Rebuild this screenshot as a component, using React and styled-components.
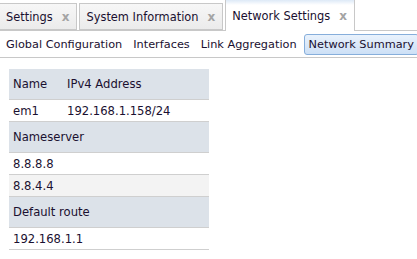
import React from "react";
import styled, { createGlobalStyle } from "styled-components";

const GlobalStyle = createGlobalStyle`
  * {
    margin: 0;
    padding: 0;
    box-sizing: border-box;
  }

  body {
    font-family: "DejaVu Sans", Verdana, sans-serif;
    font-size: 11px;
    background: #ffffff;
    color: #1a1030;
    width: 417px;
    height: 259px;
    overflow: hidden;
  }
`;

const Page = styled.div`
  display: flex;
  flex-direction: column;
`;

const TabBar = styled.div`
  display: flex;
  align-items: flex-end;
  height: 31px;
  border-bottom: 1px solid #c8c8c8;
  margin-left: -2px;
`;

const Tab = styled.div`
  display: flex;
  align-items: center;
  gap: 9px;
  height: ${(p) => (p.active ? "32px" : "27px")};
  margin-bottom: ${(p) => (p.active ? "-1px" : "0")};
  margin-right: 2px;
  padding: 0 7px 0 6px;
  border: 1px solid #c8c8c8;
  border-bottom: ${(p) => (p.active ? "none" : "1px solid #c8c8c8")};
  background: ${(p) =>
    p.active
      ? "linear-gradient(#dde9f7 0px, #ffffff 5px, #ffffff 100%)"
      : "linear-gradient(#f7f7f7, #ebebeb)"};
  font-size: 11.4px;
  color: #1a1030;
  white-space: nowrap;
  &:first-child {
    padding-left: 7px;
  }
`;

const Close = styled.span`
  color: #a4a4a4;
  font-weight: bold;
  font-size: 12px;
  padding-top: 1px;
`;

const SubNav = styled.div`
  display: flex;
  align-items: center;
  height: 27px;
  padding: 0 0 0 1px;
  gap: 1px;
  border-bottom: 1px solid #c8c8c8;
`;

const SubLink = styled.div`
  padding: 3px 4px 3px 4px;
  margin-left: ${(p) => (p.selected ? "1px" : "0")};
  border: 1px solid ${(p) => (p.selected ? "#86aedb" : "transparent")};
  border-radius: 3px;
  background: ${(p) =>
    p.selected ? "linear-gradient(#e9f2fc, #cde0f6)" : "transparent"};
  font-size: 11.3px;
  white-space: nowrap;
`;

const Table = styled.div`
  width: 200px;
  margin: 11px 0 0 9px;
  display: flex;
  flex-direction: column;
`;

const Row = styled.div`
  display: flex;
  align-items: center;
  height: ${(p) => (p.head ? "31px" : "22px")};
  padding-left: 4px;
  border-bottom: 1px solid #cfcfcf;
  background: ${(p) =>
    p.head ? "#dce2e9" : p.alt ? "#f3f3f3" : "#ffffff"};
  font-size: 11.6px;
`;

const Cell = styled.div`
  width: ${(p) => p.w || "auto"};
`;

const tabs = [
  { label: "Settings" },
  { label: "System Information" },
  { label: "Network Settings", active: true },
];

const links = ["Global Configuration", "Interfaces", "Link Aggregation"];

export default function App() {
  return (
    <>
      <GlobalStyle />
      <Page>
        <TabBar>
          {tabs.map((t) => (
            <Tab key={t.label} active={t.active}>
              <span>{t.label}</span>
              <Close>x</Close>
            </Tab>
          ))}
        </TabBar>
        <SubNav>
          {links.map((l) => (
            <SubLink key={l}>{l}</SubLink>
          ))}
          <SubLink selected>Network Summary</SubLink>
        </SubNav>
        <Table>
          <Row head>
            <Cell w="54px">Name</Cell>
            <Cell>IPv4 Address</Cell>
          </Row>
          <Row>
            <Cell w="54px">em1</Cell>
            <Cell>192.168.1.158/24</Cell>
          </Row>
          <Row head>Nameserver</Row>
          <Row>8.8.8.8</Row>
          <Row alt>8.8.4.4</Row>
          <Row head>Default route</Row>
          <Row>192.168.1.1</Row>
        </Table>
      </Page>
    </>
  );
}
